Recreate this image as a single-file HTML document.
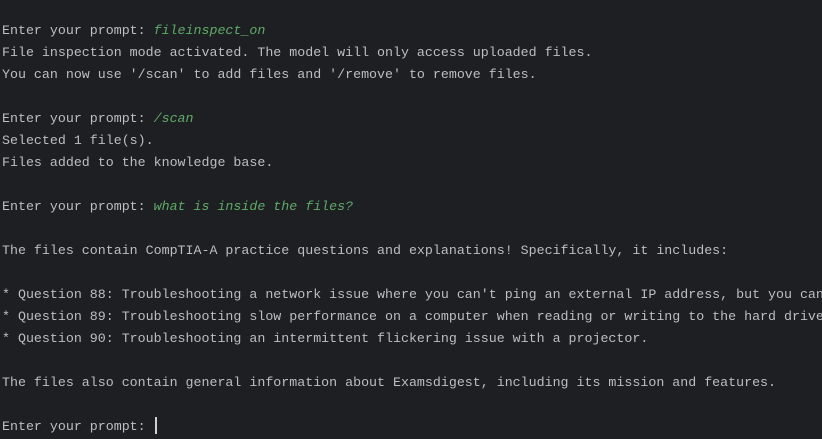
<!DOCTYPE html>
<html><head><style>
html,body{margin:0;padding:0;width:822px;height:439px;overflow:hidden;background:#1e1f22;}
pre{margin:0;position:absolute;left:2px;top:20px;font-family:"Liberation Mono",monospace;font-size:13.3px;line-height:22px;color:#bcbec4;white-space:pre;}
.g{color:#5faa68;font-style:italic;}
.c{display:inline-block;width:2px;height:17px;background:#ced0d6;vertical-align:-4px;margin-left:1px;}
</style></head><body><pre>Enter your prompt: <span class="g">fileinspect_on</span>
File inspection mode activated. The model will only access uploaded files.
You can now use '/scan' to add files and '/remove' to remove files.

Enter your prompt: <span class="g">/scan</span>
Selected 1 file(s).
Files added to the knowledge base.

Enter your prompt: <span class="g">what is inside the files?</span>

The files contain CompTIA-A practice questions and explanations! Specifically, it includes:

* Question 88: Troubleshooting a network issue where you can't ping an external IP address, but you can
* Question 89: Troubleshooting slow performance on a computer when reading or writing to the hard drive
* Question 90: Troubleshooting an intermittent flickering issue with a projector.

The files also contain general information about Examsdigest, including its mission and features.

Enter your prompt: <span class="c"></span></pre></body></html>
